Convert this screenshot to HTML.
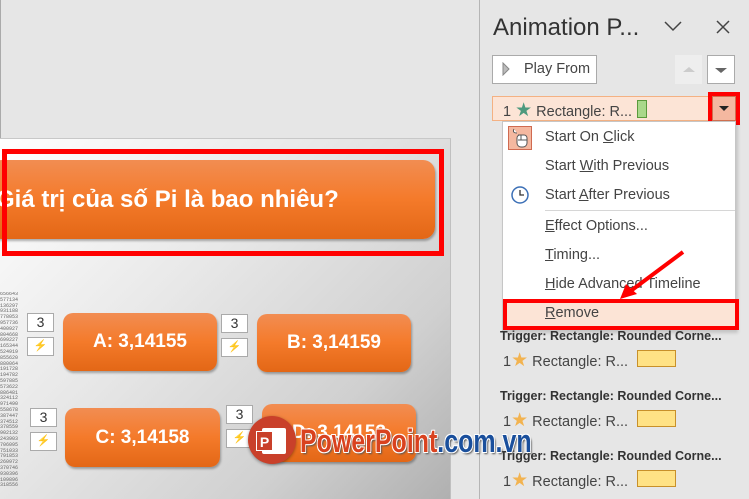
<!DOCTYPE html>
<html><head><meta charset="utf-8"><style>
*{margin:0;padding:0;box-sizing:border-box}
body{width:749px;height:499px;background:#e6e6e6;position:relative;overflow:hidden;font-family:"Liberation Sans",sans-serif}
.a{position:absolute}
.slide{left:0;top:138px;width:451px;height:361px;background:linear-gradient(135deg,#ffffff 0%,#e8e8e8 40%,#d0d0d0 75%,#b0b0b0 100%);border-top:1px solid #c8c8c8;border-right:1px solid #c0c0c0}
.btn{background:linear-gradient(#f28d52,#f47a2a 50%,#e36716);border-radius:10px;color:#fff;font-weight:bold;display:flex;align-items:center;justify-content:center;box-shadow:1px 2px 2px rgba(0,0,0,.3);font-family:"Liberation Sans",sans-serif}
.sm{width:27px;height:19px;background:#fff;border:1px solid #aaa;font-size:14px;color:#333;text-align:center;line-height:17px}
.lt{width:27px;height:19px;background:#fff;border:1px solid #aaa;font-size:11px;color:#d4a000;text-align:center;line-height:17px;font-weight:bold}
.panel{left:479px;top:0;width:270px;height:499px;background:#e6e6e6;border-left:1px solid #b5b5b5}
.mi{position:absolute;left:545px;font-size:14.5px;color:#444}
.tr{position:absolute;left:500px;font-size:12.5px;font-weight:bold;color:#333}
.row{position:absolute;left:503px;font-size:14.5px;color:#444}
.yb{position:absolute;left:637px;width:39px;height:17px;background:#ffe285;border:1px solid #c8902a}
.star{color:#f2b350;font-size:19px}
</style></head><body>
<div class="a" style="left:0;top:0;width:1px;height:499px;background:#aaa"></div>
<div class="a slide"></div>
<div class="a" style="left:0;top:292px;width:22px;height:205px;font:5px 'Liberation Mono',monospace;color:#666;line-height:5.8px;overflow:hidden">656643<br>577134<br>136297<br>931188<br>778053<br>957736<br>400927<br>804668<br>699227<br>165344<br>524919<br>855620<br>880064<br>191728<br>194782<br>597885<br>573622<br>886481<br>324112<br>971490<br>558678<br>387447<br>374512<br>378559<br>902132<br>243903<br>706095<br>751033<br>791853<br>260972<br>370746<br>930396<br>109896<br>318556</div>
<div class="a btn" style="left:-10px;top:160px;width:445px;height:79px;font-size:24px;justify-content:flex-start;padding-left:6px;border-radius:12px">Giá trị của số Pi là bao nhiêu?</div>
<div class="a" style="left:2px;top:149px;width:442px;height:107px;border:5px solid #f00"></div>
<div class="a btn" style="left:63px;top:313px;width:154px;height:58px;font-size:19px">A: 3,14155</div>
<div class="a btn" style="left:257px;top:314px;width:154px;height:58px;font-size:19px">B: 3,14159</div>
<div class="a btn" style="left:65px;top:408px;width:155px;height:59px;font-size:19px">C: 3,14158</div>
<div class="a btn" style="left:262px;top:404px;width:154px;height:58px;font-size:19px">D: 3,14153</div>
<div class="a sm" style="left:27px;top:313px">3</div><div class="a lt" style="left:27px;top:337px">⚡</div>
<div class="a sm" style="left:221px;top:314px">3</div><div class="a lt" style="left:221px;top:338px">⚡</div>
<div class="a sm" style="left:30px;top:408px">3</div><div class="a lt" style="left:30px;top:432px">⚡</div>
<div class="a sm" style="left:226px;top:405px">3</div><div class="a lt" style="left:226px;top:429px">⚡</div>

<div class="a panel"></div>
<div class="a" style="left:493px;top:14px;font-size:24px;color:#333">Animation P...</div>
<svg class="a" style="left:663px;top:20px" width="20" height="12"><path d="M2 2L10 10L18 2" stroke="#444" stroke-width="1.5" fill="none"/></svg>
<svg class="a" style="left:715px;top:19px" width="16" height="16"><path d="M2 2L14 14M14 2L2 14" stroke="#444" stroke-width="1.5"/></svg>
<div class="a" style="left:492px;top:55px;width:105px;height:29px;background:#fff;border:1px solid #aaa;font-size:14.5px;color:#444;line-height:27px;padding-left:31px">Play From</div>
<svg class="a" style="left:502px;top:62px" width="8" height="14"><path d="M1 1L7 7L1 13Z" fill="#bbb" stroke="#888"/></svg>
<div class="a" style="left:675px;top:55px;width:27px;height:29px;background:#eee"></div>
<svg class="a" style="left:682px;top:66px" width="14" height="7"><path d="M1 6L7 1L13 6Z" fill="#ccc"/></svg>
<div class="a" style="left:707px;top:55px;width:28px;height:29px;background:#fff;border:1px solid #aaa"></div>
<svg class="a" style="left:714px;top:67px" width="14" height="7"><path d="M1 1L7 6L13 1Z" fill="#666"/></svg>
<div class="a" style="left:492px;top:96px;width:246px;height:25px;background:#fce4d6;border:1px solid #f4b183"></div>
<div class="a" style="left:503px;top:99px;font-size:14.5px;color:#444">1 <span style="color:#4e9a7e;font-size:19px">★</span> Rectangle: R...</div>
<div class="a" style="left:637px;top:100px;width:10px;height:18px;background:#a9d88a;border:1px solid #5a9a3c"></div>
<div class="a" style="left:708px;top:92px;width:32px;height:33px;border:4px solid #f00"></div>
<div class="a" style="left:712px;top:96px;width:24px;height:25px;background:#f4b8a0;border:1px solid #d07050"></div>
<svg class="a" style="left:718px;top:105px" width="12" height="7"><path d="M1 1L6 6L11 1Z" fill="#222"/></svg>

<div class="a" style="left:502px;top:121px;width:234px;height:210px;background:#fff;border:1px solid #c6c6c6;box-shadow:2px 2px 3px rgba(0,0,0,.15)"></div>
<div class="a" style="left:508px;top:126px;width:24px;height:24px;background:#f4b8a0;border:1px solid #d06a50"></div>
<svg class="a" style="left:510px;top:127px" width="20" height="22"><path d="M4 2Q2 6 7 6M8 8h6a3 3 0 0 1 3 3v5a4 4 0 0 1-4 4h-2a4 4 0 0 1-4-4v-5a3 3 0 0 1 3-3zM11 8v5M8 13h9" stroke="#555" stroke-width="1" fill="#fff"/></svg>
<svg class="a" style="left:510px;top:185px" width="20" height="20"><circle cx="10" cy="10" r="8" stroke="#3b6fb6" stroke-width="1.5" fill="#fff"/><path d="M10 5v5h4" stroke="#333" stroke-width="1.3" fill="none"/></svg>
<div class="mi" style="top:129px">Start On <u>C</u>lick</div>
<div class="mi" style="top:158px">Start <u>W</u>ith Previous</div>
<div class="mi" style="top:187px">Start <u>A</u>fter Previous</div>
<div class="a" style="left:545px;top:210px;width:190px;height:1px;background:#d6d6d6"></div>
<div class="mi" style="top:218px"><u>E</u>ffect Options...</div>
<div class="mi" style="top:247px"><u>T</u>iming...</div>
<div class="mi" style="top:276px"><u>H</u>ide Advanced Timeline</div>
<div class="a" style="left:503px;top:299px;width:236px;height:31px;border:4px solid #f00;background:#fce4d6"></div>
<div class="mi" style="top:305px"><u>R</u>emove</div>
<svg class="a" style="left:610px;top:248px" width="80" height="55"><path d="M73 4L18 45" stroke="#f00" stroke-width="4"/><path d="M10 51L16 36L27 46Z" fill="#f00"/></svg>

<div class="tr" style="top:329px">Trigger: Rectangle: Rounded Corne...</div>
<div class="row" style="top:349px">1<span class="star">★</span> Rectangle: R...</div><div class="yb" style="top:350px"></div>
<div class="tr" style="top:389px">Trigger: Rectangle: Rounded Corne...</div>
<div class="row" style="top:409px">1<span class="star">★</span> Rectangle: R...</div><div class="yb" style="top:410px"></div>
<div class="tr" style="top:449px">Trigger: Rectangle: Rounded Corne...</div>
<div class="row" style="top:469px">1<span class="star">★</span> Rectangle: R...</div><div class="yb" style="top:470px"></div>

<div class="a" style="left:248px;top:416px;width:48px;height:48px;border-radius:50%;background:#c9402a;box-shadow:0 1px 3px rgba(0,0,0,.4)"></div>
<div class="a" style="left:262px;top:428px;width:24px;height:26px;background:#fff;border-radius:2px"></div>
<div class="a" style="left:256px;top:431px;width:17px;height:20px;background:#c9402a;color:#fff;font:bold 14px 'Liberation Sans';text-align:center;line-height:20px;border:1px solid #fff">P</div>
<div class="a" style="left:300px;top:423px;font:bold 32px 'Liberation Sans',sans-serif;transform:scaleX(0.78);transform-origin:0 0;text-shadow:1px 1px 0 #fff,-1px -1px 0 #fff,1px -1px 0 #fff,-1px 1px 0 #fff,2px 2px 2px #555;white-space:nowrap"><span style="color:#d9421f">PowerPoint</span><span style="color:#1a4f9c">.com.vn</span></div>
</body></html>
